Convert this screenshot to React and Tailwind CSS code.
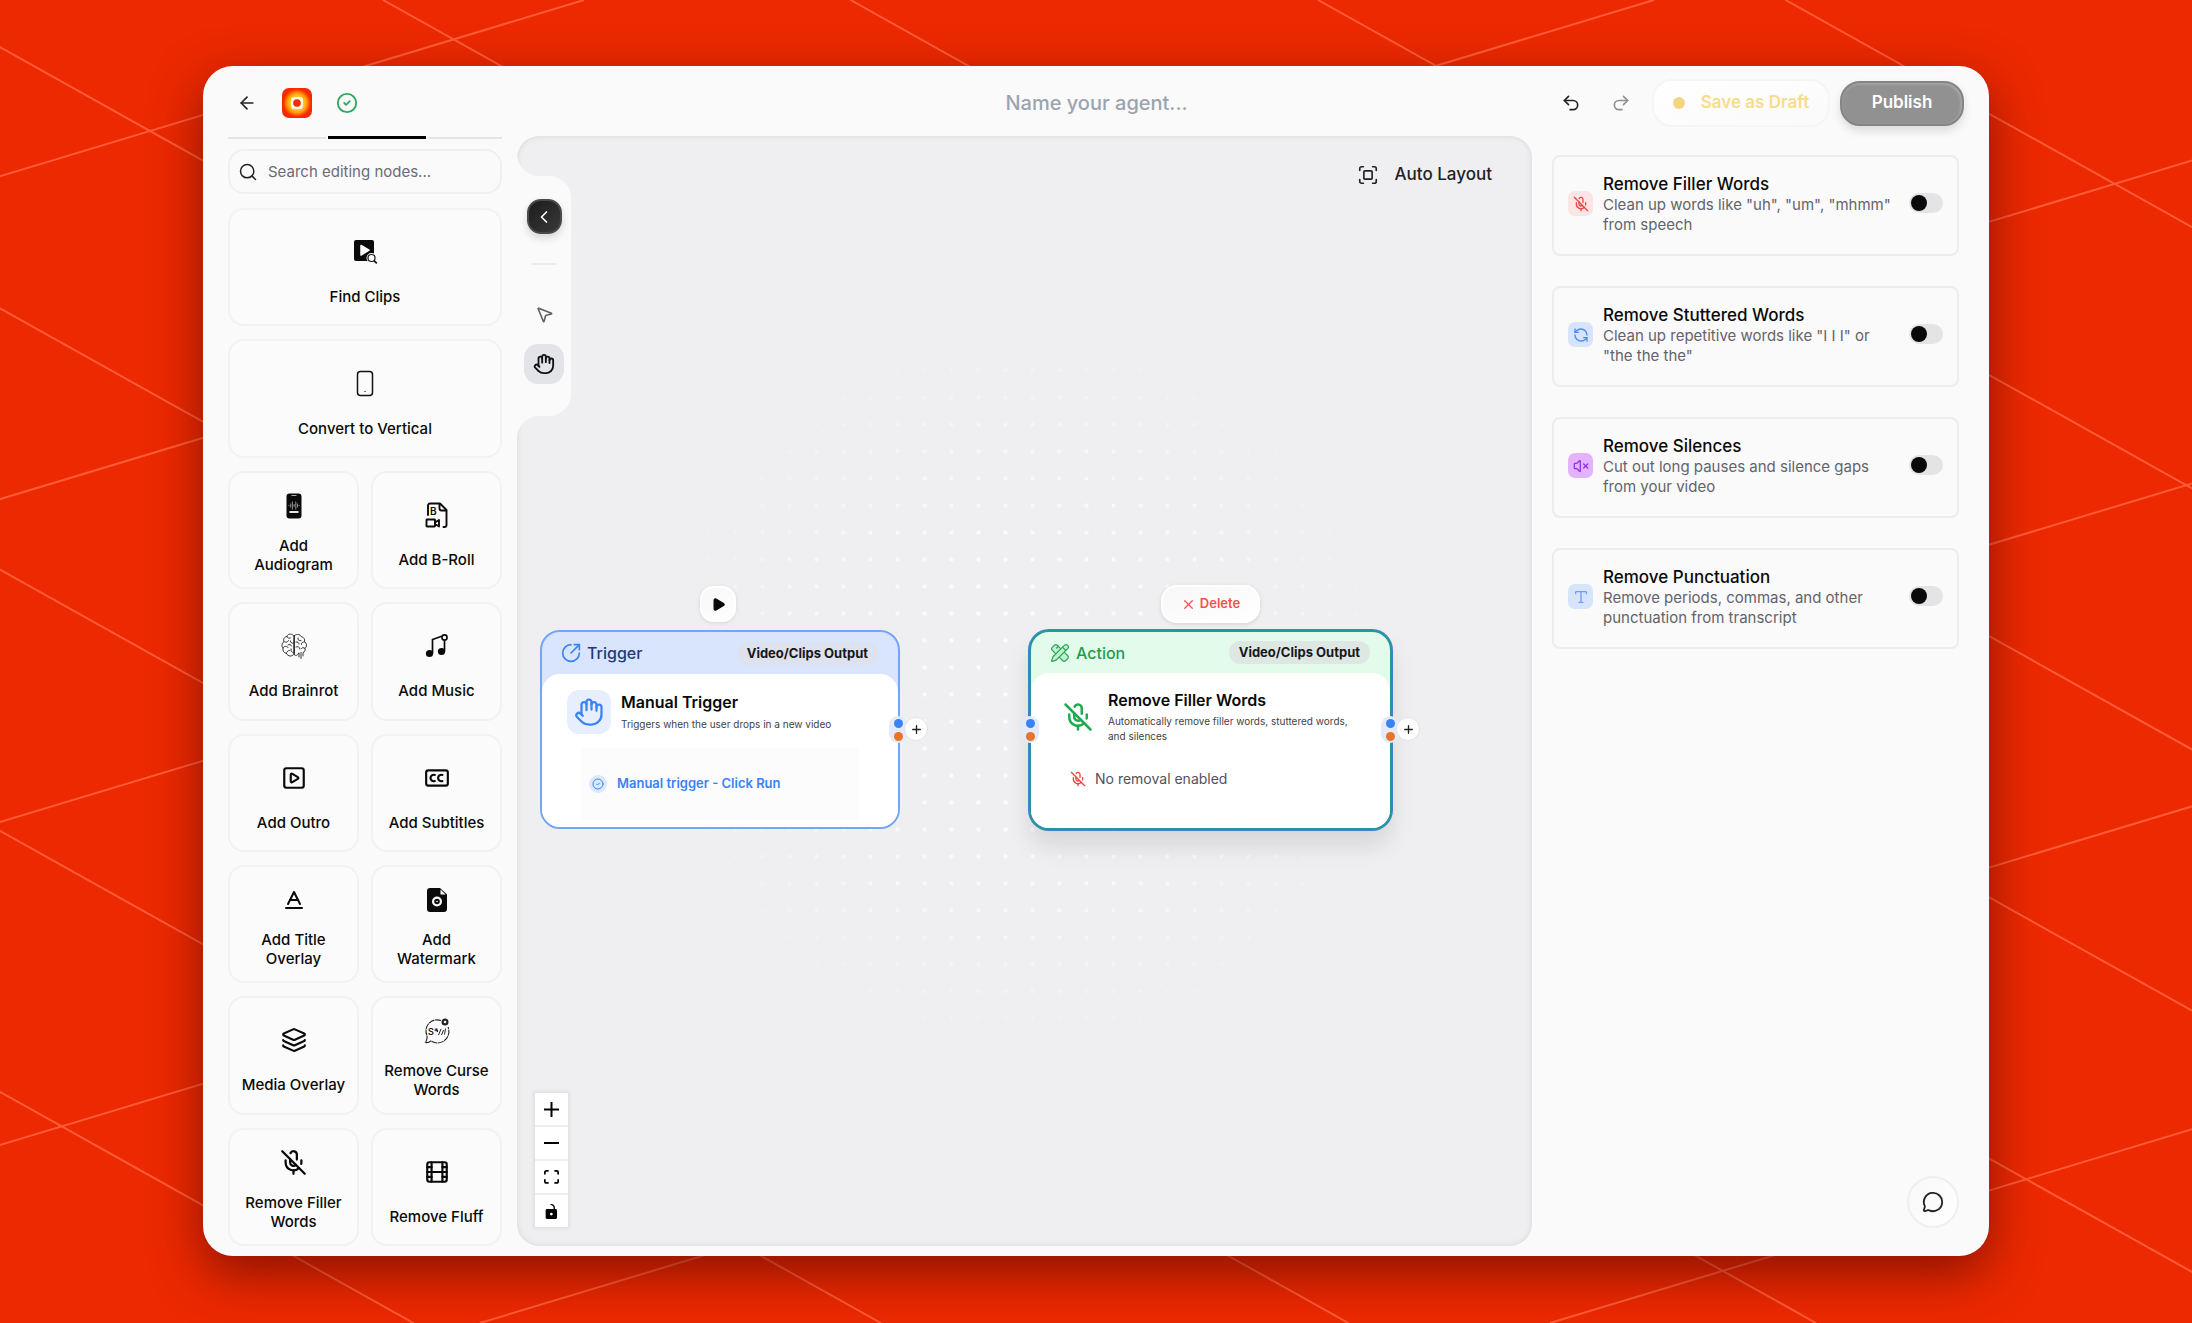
import {
  ArrowLeft,
  Baseline,
  ChevronLeft,
  CircleArrowOutUpRight,
  CircleCheck,
  ClosedCaption,
  Film,
  Hand,
  Layers,
  MessageCircle,
  MicOff,
  MousePointer2,
  PencilRuler,
  Play,
  Plus,
  Redo2,
  RefreshCw,
  Search,
  SquarePlay,
  Type,
  Undo2,
  VolumeX,
  X,
} from 'lucide-react'

const FindClipsIcon = () => (
  <svg viewBox="0 0 26 26" className="size-[26px]">
    <path d="M4 1h16a2 2 0 0 1 2 2v17a2 2 0 0 1-2 2H4a2 2 0 0 1-2-2V3a2 2 0 0 1 2-2z" fill="#0a0a0a" />
    <path d="M9 6.500l8 4.700-8 4.800z" fill="#fff" stroke="#fff" strokeWidth="1.500" strokeLinejoin="round" />
    <circle cx="19.500" cy="19" r="5" fill="#fafafa" />
    <circle cx="19.500" cy="19" r="3.500" fill="#fff" stroke="#111" strokeWidth="1.200" />
    <path d="M22 21.600l2.800 2.800" stroke="#111" strokeWidth="1.600" />
  </svg>
)

const PhoneIcon = () => (
  <svg viewBox="0 0 18 28" className="h-7 w-[18px]" fill="none" stroke="#111">
    <rect x="1.500" y="1.500" width="15" height="24" rx="3" strokeWidth="1.500" />
    <path d="M8 21.500h2" stroke="#777" strokeWidth="1" />
  </svg>
)

const AudiogramIcon = () => (
  <svg viewBox="0 0 16 26" className="h-[26px] w-4">
    <rect x="0.500" y="0.500" width="15" height="25" rx="3" fill="#0a0a0a" />
    <path d="M5.500 2.500h5" stroke="#aaa" strokeWidth="1" />
    <path d="M3 12v1M4.700 10.500v4M6.400 8.500v8M8.100 11v3M9.800 8.500v8M11.500 10.500v4M13.200 12v1" stroke="#ccc" strokeWidth="0.700" />
    <path d="M3.500 19h9" stroke="#fff" strokeWidth="1.800" />
  </svg>
)

const BRollIcon = () => (
  <svg viewBox="0 0 24 26" className="h-[26px] w-6" fill="none" stroke="#0a0a0a" strokeWidth="1.900" strokeLinejoin="round">
    <path d="M3 13V3.500A2 2 0 0 1 5 1.500h10l6.500 6.500v15a2 2 0 0 1-2 2h-1" strokeLinecap="round" />
    <path d="M14.500 2v4.500a2 2 0 0 0 2 2h5" />
    <rect x="1.500" y="17.500" width="8.500" height="7" rx="0.500" />
    <path d="M10 20.500l4-2.500v6.500l-4-2.500z" />
    <text x="5" y="12.800" fontFamily="Inter, sans-serif" fontSize="10" fontWeight="600" fill="#0a0a0a" stroke="none">
      B
    </text>
  </svg>
)

const BrainIcon = () => (
  <svg viewBox="0 0 26 26" className="size-[26px]" fill="none" stroke="#222" strokeWidth="0.900" strokeLinecap="round">
    <path d="M12.500 2.500C10 0 6.500 1 6 3.500 3 4 2 6.500 3 8.500c-2.500 2-2.500 5-1 6.500-.5 3 1 5 3.500 5.500C7 23.500 11 24 12.500 21.500z" />
    <path d="M13.500 2.500c2.500-2 6-1 6.500 1 3 .5 4 3 3.500 5 2.500 2 2.500 5 .5 7 .5 2-.5 3.500-2 4v3.500M20 19.500v6M18 20v4M13.500 2.500V22c1 1 3 .5 4-1.500" />
    <path d="M6 3.500c.5 2 2.500 2 3.500 1.500M3 8.500c2 1.500 4 .5 4.500-1M9.500 8c0 2 1.500 2.500 3 2M2 15c1-2 4-2.500 5-.5M7 12c1.500-1 3-.5 3.500 1M5.500 20.500c0-2 1.500-3 3-3M10 16c-.5 2 .5 3 2 3.500" />
    <path d="M17 5c-.5 2 1 3 3 2.500M15 9c1.500-.5 3 .5 3 2M23.500 9c-2-.5-3.500 1-3 2.500M15 14c2-1 4 0 4 2M24 15.500c-1.500-1.500-3-1-3.500 0" />
  </svg>
)

const MusicIcon = () => (
  <svg viewBox="0 0 26 26" className="size-[26px]" fill="none" stroke="#0a0a0a">
    <path d="M8.500 20V6.500l8.500-3M20.500 8v10" strokeWidth="1.700" strokeLinecap="round" />
    <circle cx="5.500" cy="20.500" r="3.600" fill="#0a0a0a" stroke="none" />
    <circle cx="17.500" cy="18.500" r="3.600" fill="#0a0a0a" stroke="none" />
    <circle cx="20.500" cy="4.500" r="2.600" strokeWidth="1.600" />
  </svg>
)

const WatermarkIcon = () => (
  <svg viewBox="0 0 22 26" className="h-[26px] w-[22px]">
    <path d="M4 1h10l7 6.500V22a3 3 0 0 1-3 3H4a3 3 0 0 1-3-3V4a3 3 0 0 1 3-3z" fill="#0a0a0a" />
    <path d="M14.500 2.500v5h5z" fill="#fafafa" />
    <circle cx="11" cy="14.500" r="3.900" fill="#0a0a0a" stroke="#fafafa" strokeWidth="2.200" />
    <circle cx="11" cy="14.500" r="0.800" fill="#fafafa" />
  </svg>
)

const CurseIcon = () => (
  <svg viewBox="0 0 26 26" className="size-[26px]" fill="none" stroke="#222">
    <path
      d="M17 2.600A11 11 0 0 0 3 17.500C3.500 20 2.500 22.500 1.500 24.500c2.500.5 4-.5 5.500-1.500A11.500 11.500 0 0 0 24 9"
      strokeWidth="1.100"
      strokeDasharray="6 0.600"
    />
    <circle cx="21" cy="4" r="2.400" strokeWidth="2.200" />
    <text x="4" y="17" fontFamily="Inter, sans-serif" fontSize="9" fontWeight="600" fill="#222" stroke="none">
      S*
    </text>
    <path d="M14.500 17l2.500-6M17.500 17l2-5M20.500 16.500l1-6M13.500 12v2" strokeWidth="1" />
  </svg>
)

const ScanIcon = () => (
  <svg viewBox="0 0 24 24" className="size-[22px]" fill="none" stroke="currentColor" strokeWidth="1.800" strokeLinecap="round">
    <path d="M3 7V5a2 2 0 0 1 2-2h2M17 3h2a2 2 0 0 1 2 2v2M21 17v2a2 2 0 0 1-2 2h-2M7 21H5a2 2 0 0 1-2-2v-2" />
    <rect x="7.500" y="7.500" width="9" height="9" rx="1" />
  </svg>
)

const LogoMark = () => (
  <svg viewBox="0 0 30 30" className="size-[30px]">
    <defs>
      <radialGradient id="glow">
        <stop offset="0.400" stopColor="#ffd23a" />
        <stop offset="0.700" stopColor="#ff9d0a" />
        <stop offset="0.850" stopColor="#ff5a00" />
        <stop offset="1" stopColor="#f42a00" />
      </radialGradient>
    </defs>
    <rect width="30" height="30" rx="7" fill="#f42a00" />
    <circle cx="15" cy="15" r="14" fill="url(#glow)" />
    <rect x="9" y="9" width="12" height="12" rx="3" fill="#fff3e2" />
    <circle cx="15" cy="15" r="3.800" fill="#f42a00" />
  </svg>
)

const wideNodes = [
  { label: 'Find Clips', icon: <FindClipsIcon /> },
  { label: 'Convert to Vertical', icon: <PhoneIcon /> },
]

const editingNodes = [
  { label: 'Add Audiogram', icon: <AudiogramIcon />, twoLines: true },
  { label: 'Add B-Roll', icon: <BRollIcon /> },
  { label: 'Add Brainrot', icon: <BrainIcon /> },
  { label: 'Add Music', icon: <MusicIcon /> },
  { label: 'Add Outro', icon: <SquarePlay size={26} strokeWidth={2} /> },
  { label: 'Add Subtitles', icon: <ClosedCaption size={26} strokeWidth={2} /> },
  { label: 'Add Title Overlay', icon: <Baseline size={24} strokeWidth={2} />, twoLines: true },
  { label: 'Add Watermark', icon: <WatermarkIcon />, twoLines: true },
  { label: 'Media Overlay', icon: <Layers size={26} strokeWidth={2} /> },
  { label: 'Remove Curse Words', icon: <CurseIcon />, twoLines: true },
  { label: 'Remove Filler Words', icon: <MicOff size={27} strokeWidth={2} />, twoLines: true },
  { label: 'Remove Fluff', icon: <Film size={26} strokeWidth={2} /> },
]

const settings = [
  {
    id: 'filler',
    title: 'Remove Filler Words',
    text: 'Clean up words like "uh", "um", "mhmm" from speech',
    icon: MicOff,
    tile: 'bg-[#fde4e5] text-[#ef4444]',
  },
  {
    id: 'stutter',
    title: 'Remove Stuttered Words',
    text: 'Clean up repetitive words like "I I I" or "the the the"',
    icon: RefreshCw,
    tile: 'bg-[#d6e5fd] text-[#4a8bf7]',
    flip: true,
  },
  {
    id: 'silence',
    title: 'Remove Silences',
    text: 'Cut out long pauses and silence gaps from your video',
    icon: VolumeX,
    tile: 'bg-[#e3b3fd] text-[#9333ea]',
  },
  {
    id: 'punctuation',
    title: 'Remove Punctuation',
    text: 'Remove periods, commas, and other punctuation from transcript',
    icon: Type,
    tile: 'bg-[#d6e5fd] text-[#6aa0f8]',
  },
]

const controls = [
  {
    name: 'Zoom in',
    box: '0 0 32 32',
    d: 'M32 18.133H18.133V32h-4.266V18.133H0v-4.266h13.867V0h4.266v13.867H32z',
  },
  { name: 'Zoom out', box: '0 0 32 5', d: 'M0 0h32v4.2H0z' },
  {
    name: 'Fit view',
    box: '0 0 32 30',
    d: 'M3.692 4.63c0-.53.4-.938.939-.938h5.215V0H4.708C2.13 0 0 2.054 0 4.63v5.216h3.692V4.631zM27.354 0h-5.2v3.692h5.17c.53 0 .984.4.984.939v5.215H32V4.631A4.624 4.624 0 0027.354 0zm.954 24.83c0 .532-.4.94-.939.94h-5.215v3.768h5.215c2.577 0 4.631-2.13 4.631-4.707v-5.139h-3.692v5.139zm-23.677.94c-.531 0-.939-.4-.939-.94v-5.138H0v5.139c0 2.577 2.13 4.707 4.708 4.707h5.138V25.77H4.631z',
  },
  {
    name: 'Toggle lock',
    box: '0 0 25 32',
    d: 'M21.333 10.667H19.81V7.619C19.81 3.429 16.38 0 12.19 0c-4.114 1.828-1.37 2.133.305 2.438 1.676.305 4.42 2.59 4.42 5.181v3.048H3.047A3.056 3.056 0 000 13.714v15.238A3.056 3.056 0 003.048 32h18.285a3.056 3.056 0 003.048-3.048V13.714a3.056 3.056 0 00-3.048-3.047zM12.19 24.533a3.056 3.056 0 01-3.047-3.047 3.056 3.056 0 013.047-3.048 3.056 3.056 0 013.048 3.048 3.056 3.056 0 01-3.048 3.047z',
  },
]

const Backdrop = () => (
  <svg
    viewBox="0 0 2192 1323"
    preserveAspectRatio="xMidYMid slice"
    className="absolute inset-0 h-full w-full"
    stroke="#ff5b38"
    strokeWidth="2"
    aria-hidden="true"
  >
    {[-5, -4, -3, -2, -1, 0, 1, 2, 3, 4].map((k) => (
      <line key={k} x1={383 + 467.5 * k} y1="0" x2={2751 + 467.5 * k} y2="1323" />
    ))}
    {[0, 1, 2, 3, 4, 5].map((k) => (
      <line key={k} x1={584 + 1070 * k} y1="0" x2={-3800 + 1070 * k} y2="1323" />
    ))}
  </svg>
)

const NodeCard = ({ label, icon, twoLines, wide }) => (
  <button
    className={`flex flex-col items-center justify-center rounded-2xl border-2 border-[#f2f2f3] bg-[#fbfbfb] ${
      twoLines ? 'gap-1.5 pb-1' : 'gap-[11px]'
    } ${wide ? 'col-span-2' : ''}`}
  >
    <span className="flex h-12 items-center text-[#0a0a0a]">{icon}</span>
    <span className={`text-[15px] leading-[19px] font-medium text-[#0a0a0a] ${wide ? '' : 'max-w-[106px]'}`}>
      {label}
    </span>
  </button>
)

const Handle = ({ className }) => (
  <div className={`absolute top-[86px] flex h-[27px] w-[18px] flex-col items-center justify-center gap-1 rounded-full bg-[#e3ebfb] ${className}`}>
    <span className="size-[9px] rounded-full bg-[#3b82f6]" />
    <span className="size-[9px] rounded-full bg-[#e8732a]" />
  </div>
)

const AddButton = () => (
  <button
    aria-label="Add node"
    className="absolute top-[87px] -right-7 flex size-6 items-center justify-center rounded-full border border-[#e2e2e4] bg-white text-[#222]"
  >
    <Plus size={13} strokeWidth={2.5} />
  </button>
)

const App = () => {
  return (
    <div className="relative flex h-screen flex-col bg-[#ec2900] px-[203px] pt-[66px] pb-[67px] font-[Inter,sans-serif] text-[#0a0a0a]">
      <Backdrop />

      <div className="relative flex min-h-0 flex-1 flex-col rounded-[30px] bg-[#fafafa] shadow-[0_18px_50px_rgba(60,0,0,0.55)]">
        <header className="grid h-[70px] shrink-0 grid-cols-[1fr_auto_1fr] items-center pt-1 pr-[25px] pl-[34px]">
          <div className="flex items-center">
            <button aria-label="Back" className="flex size-5 items-center justify-center text-[#222]">
              <ArrowLeft size={20} strokeWidth={2} />
            </button>
            <div className="ml-[25px]">
              <LogoMark />
            </div>
            <CircleCheck size={22} strokeWidth={2} className="ml-6 text-[#2fa85a]" />
          </div>
          <input
            aria-label="Agent name"
            placeholder="Name your agent..."
            className="mr-2 w-80 bg-transparent text-center text-xl font-medium outline-none placeholder:text-[#9ca3af]"
          />
          <div className="flex items-center justify-end">
            <button aria-label="Undo" className="p-[15px] text-[#222]">
              <Undo2 size={20} strokeWidth={2} />
            </button>
            <button aria-label="Redo" className="p-[15px] text-[#8f8f92]">
              <Redo2 size={20} strokeWidth={2} />
            </button>
            <button className="ml-1.5 flex h-12 w-[178px] items-center justify-center gap-4 rounded-[20px] border-2 border-[#f5f5f6] bg-gradient-to-br from-white to-[#fafafa] text-[17px] font-semibold text-[#f8dc8a]">
              <span className="size-3 rounded-full bg-[#f4d57e]" />
              Save as Draft
            </button>
            <button className="ml-2.5 h-[45px] w-[124px] rounded-[20px] border-2 border-[#858585] bg-[#919191] text-[17px] font-semibold text-white shadow-[inset_-1px_1px_3px_rgba(255,255,255,0.3),0_5px_10px_rgba(0,0,0,0.12)]">
              Publish
            </button>
          </div>
        </header>

        <div className="flex min-h-0 flex-1 pr-[30px] pb-[10px] pl-[25px]">
          <aside className="flex w-[274px] shrink-0 flex-col">
            <div className="flex h-[3px] shrink-0 items-center gap-0.5 overflow-hidden">
              <div className="h-0.5 w-[98px] shrink-0 bg-[#e4e5e8]" />
              <div className="h-[3px] w-[98px] shrink-0 bg-black" />
              <div className="h-0.5 w-[98px] shrink-0 bg-[#e4e5e8]" />
            </div>
            <label className="mt-2.5 flex h-[45px] shrink-0 items-center gap-2.5 rounded-2xl border-2 border-[#f0f0f1] px-2">
              <Search size={20} strokeWidth={1.8} className="shrink-0 text-[#222]" />
              <input
                aria-label="Search editing nodes"
                placeholder="Search editing nodes..."
                className="w-full min-w-0 bg-transparent pt-0.5 text-[15px] outline-none placeholder:text-[#6b6b74]"
              />
            </label>
            <div className="mt-[14px] grid min-h-0 flex-1 auto-rows-fr grid-cols-2 gap-x-3 gap-y-[13px]">
              {wideNodes.map((n) => (
                <NodeCard key={n.label} {...n} wide />
              ))}
              {editingNodes.map((n) => (
                <NodeCard key={n.label} {...n} />
              ))}
            </div>
          </aside>

          <main className="relative ml-[15px] min-w-0 flex-1 overflow-hidden rounded-[22px] bg-[#efeff1] shadow-[inset_0_0_6px_rgba(0,0,0,0.1)]">
            {/* dotted grid, fading out from the centre */}
            <div className="absolute inset-0 bg-[radial-gradient(circle,#ffffff_1px,transparent_3px)] bg-size-[27px_27px] bg-position-[-11px_5px] mask-[radial-gradient(circle,rgba(0,0,0,0.9)_0px,rgba(0,0,0,0.6)_220px,transparent_390px)]" />

            {/* tool tab cut into the canvas edge */}
            <div className="absolute top-10 left-0 flex w-[54px] flex-col items-center rounded-r-[22px] bg-[#fafafa] pt-[23px] pb-8">
              <svg viewBox="0 0 22 22" className="absolute -top-[22px] left-0 size-[22px]" fill="#fafafa">
                <path d="M0 0A22 22 0 0 0 22 22H0z" />
              </svg>
              <svg viewBox="0 0 22 22" className="absolute -bottom-[22px] left-0 size-[22px]" fill="#fafafa">
                <path d="M0 22A22 22 0 0 1 22 0H0z" />
              </svg>
              <button
                aria-label="Collapse"
                className="flex size-[35px] items-center justify-center rounded-[14px] border-2 border-[#4a4a4a] bg-gradient-to-br from-[#1c1c1c] to-[#3a3a3a] text-white shadow-[0_4px_8px_rgba(0,0,0,0.15)]"
              >
                <ChevronLeft size={20} strokeWidth={2} />
              </button>
              <div className="mt-[29px] h-0.5 w-6 bg-[#ebebec]" />
              <button aria-label="Select" className="mt-[29px] flex size-10 items-center justify-center text-[#5f5f68]">
                <MousePointer2 size={19} strokeWidth={2} />
              </button>
              <button
                aria-label="Pan"
                className="mt-2.5 flex size-10 items-center justify-center rounded-[14px] bg-[#e3e4e9] text-[#111]"
              >
                <Hand size={22} strokeWidth={2} />
              </button>
            </div>

            <button className="absolute top-[26px] right-10 flex items-center gap-4 text-[17px] font-medium text-[#222]">
              <ScanIcon />
              Auto Layout
            </button>

            {/* trigger node */}
            <div className="absolute top-[494px] left-[23px] w-[360px]">
              <button
                aria-label="Run"
                className="absolute -top-11 left-[160px] flex size-9 items-center justify-center rounded-[14px] border-2 border-white bg-gradient-to-br from-[#f7f7f7] to-white shadow-[0_1px_4px_rgba(0,0,0,0.1)]"
              >
                <Play size={15} fill="#0a0a0a" strokeWidth={2} />
              </button>
              <div className="h-[199px] overflow-hidden rounded-[20px] border-2 border-[#74a6f8] bg-[#d8e5fd]">
                <div className="flex h-[42px] items-center pr-5 pl-[19px]">
                  <CircleArrowOutUpRight size={20} strokeWidth={2} className="text-[#3b82f6]" />
                  <span className="ml-1.5 text-base font-medium text-[#1e3a7c]">Trigger</span>
                  <span className="ml-auto rounded-full bg-[#dde2ee] px-2.5 text-[13px] leading-[23px] font-bold text-[#18181b]">
                    Video/Clips Output
                  </span>
                </div>
                <div className="h-full rounded-t-[18px] bg-white pt-4 pl-[25px]">
                  <div className="flex gap-2.5">
                    <div className="flex size-11 items-center justify-center rounded-xl bg-[#e7effe] text-[#3b82f6]">
                      <Hand size={30} strokeWidth={1.8} />
                    </div>
                    <div>
                      <h3 className="text-base leading-6 font-semibold">Manual Trigger</h3>
                      <p className="text-[10px] leading-5 text-[#3f3f46]">Triggers when the user drops in a new video</p>
                    </div>
                  </div>
                  <div className="mt-3.5 ml-3.5 flex h-[72px] w-[278px] items-center gap-2.5 bg-[#fcfcfd] pl-2">
                    <span className="flex size-[18px] items-center justify-center rounded-full bg-[#dbe9fe] text-[#3b82f6]">
                      <CircleCheck size={12} strokeWidth={2} />
                    </span>
                    <span className="text-[13px] font-semibold text-[#3b82f6]">Manual trigger - Click Run</span>
                  </div>
                </div>
              </div>
              <Handle className="-right-[7px]" />
              <AddButton />
            </div>

            {/* action node */}
            <div className="absolute top-[494px] left-[512px] w-[363px]">
              <button className="absolute -top-[45px] left-[132px] flex h-[38px] w-[99px] items-center justify-center gap-1 rounded-[16px] border-2 border-white bg-gradient-to-br from-[#f7f7f7] to-white text-[13px] font-semibold text-[#ef5350] shadow-[0_1px_4px_rgba(0,0,0,0.12)]">
                <X size={15} strokeWidth={2} />
                Delete
              </button>
              <div className="h-[200px] overflow-hidden rounded-[20px] border-2 border-[#27979a] bg-[#e3fbea] shadow-[0_0_0_1px_#3f83cc,0_16px_24px_rgba(0,0,0,0.1)]">
                <div className="flex h-[41px] items-center pr-5 pl-[19px]">
                  <PencilRuler size={20} strokeWidth={1.5} fill="#bff0cf" className="text-[#2fa85a]" />
                  <span className="ml-1.5 text-base font-medium text-[#1f9d4d]">Action</span>
                  <span className="ml-auto rounded-full bg-[#dfe7e4] px-2.5 text-[13px] leading-[23px] font-bold text-[#18181b]">
                    Video/Clips Output
                  </span>
                </div>
                <div className="h-full rounded-t-[18px] bg-white pt-[15px] pl-8">
                  <div className="flex gap-[15px]">
                    <MicOff size={30} strokeWidth={2} className="mt-3.5 shrink-0 text-[#1fab52]" />
                    <div>
                      <h3 className="text-base leading-6 font-semibold">Remove Filler Words</h3>
                      <p className="mt-0.5 w-[250px] text-[10px] leading-[15px] text-[#3f3f46]">
                        Automatically remove filler words, stuttered words, and silences
                      </p>
                    </div>
                  </div>
                  <div className="mt-[25px] ml-[7px] flex items-center gap-[9px]">
                    <MicOff size={16} strokeWidth={2} className="text-[#ef4444]" />
                    <span className="text-sm text-[#52525b]">No removal enabled</span>
                  </div>
                </div>
              </div>
              <Handle className="-left-[8px]" />
              <Handle className="-right-[7px]" />
              <AddButton />
            </div>

            <div className="absolute bottom-[19px] left-[18px] flex w-[33px] flex-col bg-white shadow-[0_0_3px_2px_rgba(0,0,0,0.06)]">
              {controls.map((c) => (
                <button
                  key={c.name}
                  aria-label={c.name}
                  className="flex h-[34px] items-center justify-center border-b-2 border-[#eeeeee] last:h-8 last:border-b-0"
                >
                  <svg viewBox={c.box} className="max-h-[15px] w-[15px]">
                    <path d={c.d} />
                  </svg>
                </button>
              ))}
            </div>
          </main>

          <aside className="relative ml-5 flex w-[407px] shrink-0 flex-col gap-[30px] pt-[19px]">
            {settings.map(({ id, title, text, icon: Icon, tile, flip }) => (
              <div key={id} className="flex h-[101px] items-start rounded-lg border-2 border-[#ededef] pt-4 pr-3.5 pl-3.5">
                <span className={`mt-[18px] flex size-[25px] shrink-0 items-center justify-center rounded-[7px] ${tile}`}>
                  <Icon size={16} strokeWidth={2} className={flip ? '-scale-x-100' : ''} />
                </span>
                <label htmlFor={id} className="ml-2.5 min-w-0 flex-1">
                  <span className="block text-[17px] leading-[22px] font-medium">{title}</span>
                  <span className="block w-[290px] text-[15px] leading-5 text-[#63636c]">{text}</span>
                </label>
                <input
                  id={id}
                  type="checkbox"
                  role="switch"
                  className="mt-5 flex h-5 w-[34px] shrink-0 appearance-none items-center rounded-full bg-[#e4e4e6] px-0.5 before:block before:size-4 before:rounded-full before:bg-[#0a0a0a] before:content-[''] checked:justify-end"
                />
              </div>
            ))}
            <button
              aria-label="Open chat"
              className="absolute right-0 bottom-[18px] flex size-[52px] items-center justify-center rounded-full border-2 border-[#efeff0] bg-gradient-to-br from-[#f8f8f9] to-white text-[#222]"
            >
              <MessageCircle size={22} strokeWidth={2} />
            </button>
          </aside>
        </div>
      </div>
    </div>
  )
}

export default App
